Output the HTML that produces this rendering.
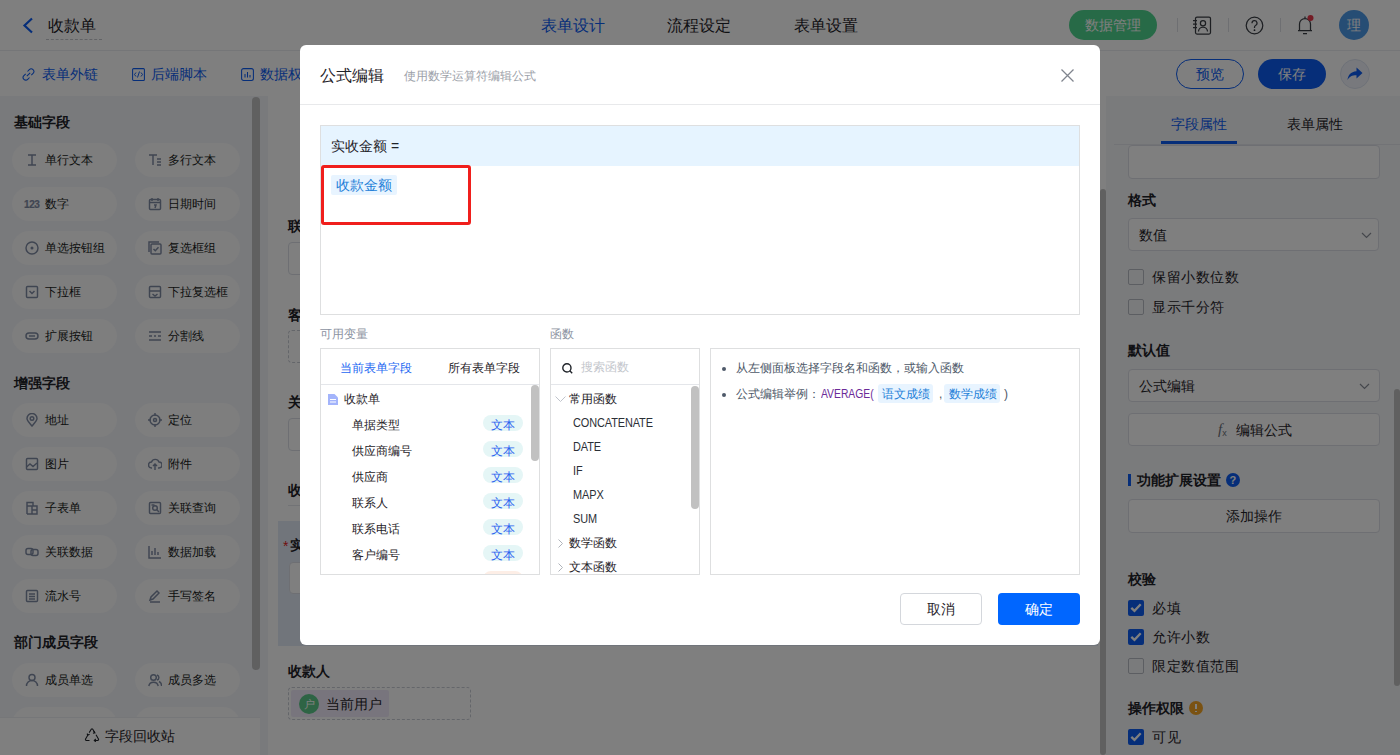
<!DOCTYPE html>
<html><head><meta charset="utf-8">
<style>
*{box-sizing:border-box;margin:0;padding:0}
html,body{width:1400px;height:755px;overflow:hidden;background:#fff}
body{position:relative;font-family:"Liberation Sans",sans-serif;font-size:14px;color:#1f2329}
.a{position:absolute}
.t{white-space:nowrap;line-height:1}
/* header */
#hdr{left:0;top:0;width:1400px;height:51px;background:#fff;border-bottom:1px solid #ebedf0}
#tb{left:0;top:51px;width:1400px;height:45px;background:#fff}
#lp{left:0;top:96px;width:262px;height:659px;background:#f2f4f8}
#cv{left:262px;top:96px;width:844px;height:659px;background:#fff}
#rp{left:1106px;top:96px;width:294px;height:659px;background:#f5f6f8}
.pill{position:absolute;width:105px;height:34px;border-radius:17px;background:#fcfcfd}
.pill .ic{position:absolute;left:13px;top:10px;width:14px;height:14px}
.pill span{position:absolute;left:33px;top:11px;font-size:12px;line-height:12px;color:#1a1d22;white-space:nowrap}
.sec{position:absolute;left:14px;font-size:14px;font-weight:bold;color:#1f2329;line-height:14px}
#mask{left:0;top:0;width:1400px;height:755px;background:rgba(0,0,0,.5)}
#modal{left:300px;top:45px;width:800px;height:600px;background:#fff;border-radius:6px;overflow:hidden}
</style></head><body>
<div id="hdr" class="a">
  <svg class="a" style="left:22px;top:17px" width="12" height="17" viewBox="0 0 12 17"><path d="M10 1.5 L2.5 8.5 L10 15.5" fill="none" stroke="#0c5cf2" stroke-width="2.2"/></svg>
  <div class="a t" style="left:48px;top:18px;font-size:16px;color:#1f2329">收款单</div>
  <div class="a" style="left:46px;top:39px;width:56px;border-top:1px dashed #c4c7cc"></div>
  <div class="a t" style="left:541px;top:18px;font-size:16px;color:#0c5cf2">表单设计</div>
  <div class="a t" style="left:667px;top:18px;font-size:16px;color:#1f2329">流程设定</div>
  <div class="a t" style="left:794px;top:18px;font-size:16px;color:#1f2329">表单设置</div>
  <div class="a" style="left:1069px;top:10px;width:88px;height:30px;border-radius:15px;background:#4fd48f"></div>
  <div class="a t" style="left:1085px;top:18px;font-size:14px;color:#fff">数据管理</div>
  <div class="a" style="left:1177px;top:18px;width:1px;height:14px;background:#dcdfe4"></div>
  <div class="a" style="left:1228px;top:18px;width:1px;height:14px;background:#dcdfe4"></div>
  <div class="a" style="left:1280px;top:18px;width:1px;height:14px;background:#dcdfe4"></div>
  <svg class="a" style="left:1192px;top:16px" width="20" height="19" viewBox="0 0 20 19"><rect x="3.5" y="1" width="15" height="17" rx="1.5" fill="none" stroke="#3a3e45" stroke-width="1.25"/><circle cx="11" cy="7.3" r="2.6" fill="none" stroke="#3a3e45" stroke-width="1.25"/><path d="M6.5 15.5a4.5 4.5 0 0 1 9 0" fill="none" stroke="#3a3e45" stroke-width="1.25"/><path d="M1 4.5h4M1 8h4M1 11.5h4" stroke="#3a3e45" stroke-width="1.25"/></svg>
  <svg class="a" style="left:1245px;top:16px" width="19" height="19" viewBox="0 0 19 19"><circle cx="9.5" cy="9.5" r="8.3" fill="none" stroke="#3a3e45" stroke-width="1.25"/><path d="M7 7.2a2.5 2.5 0 1 1 3.5 2.3c-.8.4-1 .9-1 1.8v.6" fill="none" stroke="#3a3e45" stroke-width="1.25"/><circle cx="9.5" cy="14.2" r=".9" fill="#2b2f36"/></svg>
  <svg class="a" style="left:1296px;top:14px" width="20" height="21" viewBox="0 0 20 21"><path d="M2 16.5h14M3.5 16.5V10a5.5 5.5 0 0 1 11 0v6.5M7 19.5h4M9 2.5v2" fill="none" stroke="#3a3e45" stroke-width="1.25"/><circle cx="14.5" cy="4" r="3" fill="#e8384a"/></svg>
  <div class="a" style="left:1339px;top:10px;width:30px;height:30px;border-radius:15px;background:#4d9ae8"></div>
  <div class="a t" style="left:1347px;top:18px;font-size:14px;color:#fff">理</div>
</div>
<div id="tb" class="a">
  <svg class="a" style="left:22px;top:17px" width="13" height="13" viewBox="0 0 13 13"><path d="M5.5 3.5l1.8-1.8a2.6 2.6 0 0 1 3.8 3.7L9.3 7.2M7.5 9.5L5.7 11.3a2.6 2.6 0 0 1-3.8-3.7L3.7 5.8M4.8 8.2l3.4-3.4" fill="none" stroke="#0c5cf2" stroke-width="1.05"/></svg>
  <div class="a t" style="left:42px;top:16px;font-size:14px;color:#0c5cf2">表单外链</div>
  <svg class="a" style="left:132px;top:17px" width="13" height="13" viewBox="0 0 13 13"><rect x=".6" y=".6" width="11.8" height="11.8" rx="1" fill="none" stroke="#0c5cf2" stroke-width="1.05"/><path d="M4 4.5L2.5 6.5 4 8.5M9 4.5l1.5 2L9 8.5M7.5 3.5l-2 6" fill="none" stroke="#0c5cf2" stroke-width="1"/></svg>
  <div class="a t" style="left:151px;top:16px;font-size:14px;color:#0c5cf2">后端脚本</div>
  <svg class="a" style="left:241px;top:17px" width="13" height="13" viewBox="0 0 13 13"><rect x=".6" y=".6" width="11.8" height="11.8" rx="2" fill="none" stroke="#0c5cf2" stroke-width="1.05"/><path d="M4 6v3.5M6.5 4v5.5M9 7v2.5" fill="none" stroke="#0c5cf2" stroke-width="1.05"/></svg>
  <div class="a t" style="left:260px;top:16px;font-size:14px;color:#0c5cf2">数据权限</div>
  <div class="a" style="left:1176px;top:8px;width:68px;height:30px;border-radius:15px;border:1px solid #0c5cf2"></div>
  <div class="a t" style="left:1196px;top:16px;font-size:14px;color:#0c5cf2">预览</div>
  <div class="a" style="left:1258px;top:8px;width:68px;height:30px;border-radius:15px;background:#0c5cf2"></div>
  <div class="a t" style="left:1278px;top:16px;font-size:14px;color:#fff">保存</div>
  <div class="a" style="left:1340px;top:8px;width:30px;height:30px;border-radius:15px;background:#f0f3fa;border:1px solid #dde3f0"></div>
  <svg class="a" style="left:1346px;top:15px" width="18" height="16" viewBox="0 0 18 16"><path d="M10.5 1.5L16.5 7l-6 5.5V9.3C6 9.3 3.5 10.5 1.5 14c.6-5 3-8.3 9-8.8z" fill="#0c5cf2"/></svg>
</div>
<div id="lp" class="a">
<div class="sec" style="top:19px">基础字段</div>
<div class="pill" style="left:12px;top:47px"><svg class="ic" viewBox="0 0 14 14"><path d="M3 2h8M3 12h8M7 2v10" stroke="#7f8ba3" fill="none" stroke-width="1.45"/></svg><span>单行文本</span></div>
<div class="pill" style="left:135px;top:47px"><svg class="ic" viewBox="0 0 14 14"><path d="M1 2h8M5 2v10M9 6h4M9 9h4M9 12h4" stroke="#7f8ba3" fill="none" stroke-width="1.45"/></svg><span>多行文本</span></div>
<div class="pill" style="left:12px;top:91px"><div class="t" style="position:absolute;left:12px;top:13px;font-size:10px;line-height:9px;font-weight:bold;color:#7f8ba3;letter-spacing:-.4px;-webkit-text-stroke:.2px #7f8ba3">123</div><span>数字</span></div>
<div class="pill" style="left:135px;top:91px"><svg class="ic" viewBox="0 0 14 14"><rect x="1.5" y="2.5" width="11" height="10" rx="1" stroke="#7f8ba3" fill="none" stroke-width="1.45"/><path d="M1.5 5.5h11M4 1v3M10 1v3M6 8h2l-1 3" stroke="#7f8ba3" fill="none" stroke-width="1.45"/></svg><span>日期时间</span></div>
<div class="pill" style="left:12px;top:135px"><svg class="ic" viewBox="0 0 14 14"><circle cx="7" cy="7" r="6" stroke="#7f8ba3" fill="none" stroke-width="1.45"/><circle cx="7" cy="7" r="1.5" fill="#7f8ba3"/></svg><span>单选按钮组</span></div>
<div class="pill" style="left:135px;top:135px"><svg class="ic" viewBox="0 0 14 14"><path d="M1 11V1h10" stroke="#7f8ba3" fill="none" stroke-width="1.45"/><rect x="3" y="3" width="10" height="10" rx="1" stroke="#7f8ba3" fill="none" stroke-width="1.45"/><path d="M5.5 8l1.8 1.8 3.2-3.5" stroke="#7f8ba3" fill="none" stroke-width="1.45"/></svg><span>复选框组</span></div>
<div class="pill" style="left:12px;top:179px"><svg class="ic" viewBox="0 0 14 14"><rect x="1.5" y="1.5" width="11" height="11" rx="1" stroke="#7f8ba3" fill="none" stroke-width="1.45"/><path d="M4.5 6l2.5 2.5 2.5-2.5" stroke="#7f8ba3" fill="none" stroke-width="1.45"/></svg><span>下拉框</span></div>
<div class="pill" style="left:135px;top:179px"><svg class="ic" viewBox="0 0 14 14"><rect x="1.5" y="1.5" width="11" height="11" rx="1" stroke="#7f8ba3" fill="none" stroke-width="1.45"/><path d="M1.5 6h11M4.5 9l2.5 2 2.5-2" stroke="#7f8ba3" fill="none" stroke-width="1.45"/></svg><span>下拉复选框</span></div>
<div class="pill" style="left:12px;top:223px"><svg class="ic" viewBox="0 0 14 14"><rect x="1" y="4" width="12" height="6" rx="3" stroke="#7f8ba3" fill="none" stroke-width="1.45"/><path d="M4 7h6" stroke="#7f8ba3" fill="none" stroke-width="1.45"/></svg><span>扩展按钮</span></div>
<div class="pill" style="left:135px;top:223px"><svg class="ic" viewBox="0 0 14 14"><path d="M1 3h12M1 7h3M6 7h2M10 7h3M1 11h12" stroke="#7f8ba3" fill="none" stroke-width="1.45"/></svg><span>分割线</span></div>
<div class="sec" style="top:280px">增强字段</div>
<div class="pill" style="left:12px;top:307px"><svg class="ic" viewBox="0 0 14 14"><path d="M7 13C4 9.5 2 7.5 2 5.5a5 5 0 0 1 10 0c0 2-2 4-5 7.5z" stroke="#7f8ba3" fill="none" stroke-width="1.45"/><circle cx="7" cy="5.5" r="1.8" stroke="#7f8ba3" fill="none" stroke-width="1.45"/></svg><span>地址</span></div>
<div class="pill" style="left:135px;top:307px"><svg class="ic" viewBox="0 0 14 14"><circle cx="7" cy="7" r="5" stroke="#7f8ba3" fill="none" stroke-width="1.45"/><circle cx="7" cy="7" r="1.5" stroke="#7f8ba3" fill="none" stroke-width="1.45"/><path d="M7 0v3M7 11v3M0 7h3M11 7h3" stroke="#7f8ba3" fill="none" stroke-width="1.45"/></svg><span>定位</span></div>
<div class="pill" style="left:12px;top:351px"><svg class="ic" viewBox="0 0 14 14"><rect x="1.5" y="1.5" width="11" height="11" rx="1" stroke="#7f8ba3" fill="none" stroke-width="1.45"/><path d="M1.5 10l3.5-3 3 2.5 4-3.5" stroke="#7f8ba3" fill="none" stroke-width="1.45"/></svg><span>图片</span></div>
<div class="pill" style="left:135px;top:351px"><svg class="ic" viewBox="0 0 14 14"><path d="M4 11H3.5a3 3 0 0 1 0-6 4 4 0 0 1 7.5 0 3 3 0 0 1 0 6H10M7 7v6M5 9l2-2 2 2" stroke="#7f8ba3" fill="none" stroke-width="1.45"/></svg><span>附件</span></div>
<div class="pill" style="left:12px;top:395px"><svg class="ic" viewBox="0 0 14 14"><path d="M2 13V1.5h6V5M2 5h10v8H2M7 9h5M7 5v8" stroke="#7f8ba3" fill="none" stroke-width="1.45"/></svg><span>子表单</span></div>
<div class="pill" style="left:135px;top:395px"><svg class="ic" viewBox="0 0 14 14"><rect x="1.5" y="1.5" width="11" height="11" rx="1" stroke="#7f8ba3" fill="none" stroke-width="1.45"/><circle cx="7" cy="7" r="2.3" stroke="#7f8ba3" fill="none" stroke-width="1.45"/><path d="M8.6 8.6l2.4 2.4M3.5 4h3" stroke="#7f8ba3" fill="none" stroke-width="1.45"/></svg><span>关联查询</span></div>
<div class="pill" style="left:12px;top:439px"><svg class="ic" viewBox="0 0 14 14"><rect x="1" y="3.5" width="7" height="6" rx="2" stroke="#7f8ba3" fill="none" stroke-width="1.45"/><rect x="6" y="4.5" width="7" height="6" rx="2" stroke="#7f8ba3" fill="none" stroke-width="1.45"/></svg><span>关联数据</span></div>
<div class="pill" style="left:135px;top:439px"><svg class="ic" viewBox="0 0 14 14"><path d="M1 1v12h12M4 10V6M7 10V3M10 10V7" stroke="#7f8ba3" fill="none" stroke-width="1.45"/></svg><span>数据加载</span></div>
<div class="pill" style="left:12px;top:483px"><svg class="ic" viewBox="0 0 14 14"><rect x="1.5" y="1.5" width="11" height="11" rx="1" stroke="#7f8ba3" fill="none" stroke-width="1.45"/><path d="M4 5h6M4 7.5h6M4 10h6" stroke="#7f8ba3" fill="none" stroke-width="1.45"/></svg><span>流水号</span></div>
<div class="pill" style="left:135px;top:483px"><svg class="ic" viewBox="0 0 14 14"><path d="M2 11l1-3 6-6 2 2-6 6zM2 13h10" stroke="#7f8ba3" fill="none" stroke-width="1.45"/></svg><span>手写签名</span></div>
<div class="sec" style="top:539px">部门成员字段</div>
<div class="pill" style="left:12px;top:567px"><svg class="ic" viewBox="0 0 14 14"><circle cx="7" cy="4.5" r="3" stroke="#7f8ba3" fill="none" stroke-width="1.45"/><path d="M1.5 13a5.5 5.5 0 0 1 11 0" stroke="#7f8ba3" fill="none" stroke-width="1.45"/></svg><span>成员单选</span></div>
<div class="pill" style="left:135px;top:567px"><svg class="ic" viewBox="0 0 14 14"><circle cx="5.5" cy="4.5" r="2.8" stroke="#7f8ba3" fill="none" stroke-width="1.45"/><path d="M0.8 13a4.8 4.8 0 0 1 9.4 0M9 2a2.6 2.6 0 0 1 0 5M11 8.5a4.5 4.5 0 0 1 2.5 4.5" stroke="#7f8ba3" fill="none" stroke-width="1.45"/></svg><span>成员多选</span></div>
<div class="pill" style="left:12px;top:611px"><svg class="ic" viewBox="0 0 14 14"><rect x="4.5" y="1" width="5" height="4" stroke="#7f8ba3" fill="none" stroke-width="1.45"/><path d="M7 5v3M2 10V8h10v2" stroke="#7f8ba3" fill="none" stroke-width="1.45"/></svg><span>部门单选</span></div>
<div class="pill" style="left:135px;top:611px"><svg class="ic" viewBox="0 0 14 14"><rect x="4.5" y="1" width="5" height="4" stroke="#7f8ba3" fill="none" stroke-width="1.45"/><path d="M7 5v3M2 10V8h10v2" stroke="#7f8ba3" fill="none" stroke-width="1.45"/></svg><span>部门多选</span></div>
<div class="a" style="left:252px;top:1px;width:8px;height:573px;border-radius:4px;background:#c1c1c1"></div>
<div class="a" style="left:0;top:621px;width:260px;height:38px;background:#fff;border-top:1px solid #eceef2"></div>
<svg class="a" style="left:84px;top:632px" width="16" height="14" viewBox="0 0 16 14"><path d="M5.2 4.6L7.4 1h1.2l2.1 3.5M12 6.8l2.6 4.4-.6 1.3H10.5M5.5 12.5H2l-.6-1.3L3.9 7" fill="none" stroke="#1f2329" stroke-width="1.1"/><path d="M9.6 3.2l1.3 1.6-2 .4M11.8 11l-1.5 1.5 1.5 1.3M3 5.6l.9 1.5 1.7-.9" fill="none" stroke="#1f2329" stroke-width="1.1"/></svg>
<div class="a t" style="left:105px;top:633px;font-size:14px;color:#1f2329">字段回收站</div>
</div>
<div id="cv" class="a">
  <div class="a" style="left:-2px;top:0;width:8px;height:659px;background:#f2f4f8"></div>
  <div class="a t" style="left:26px;top:123px;font-size:14px;font-weight:bold;color:#1f2329">联系人</div>
  <div class="a" style="left:26px;top:146px;width:300px;height:33px;border:1px solid #dcdfe6;border-radius:4px"></div>
  <div class="a t" style="left:26px;top:212px;font-size:14px;font-weight:bold;color:#1f2329">客户编号</div>
  <div class="a" style="left:26px;top:234px;width:300px;height:33px;border:1px dashed #c8ccd4;border-radius:4px"></div>
  <div class="a t" style="left:26px;top:299px;font-size:14px;font-weight:bold;color:#1f2329">关联单据</div>
  <div class="a" style="left:26px;top:322px;width:300px;height:33px;border:1px solid #dcdfe6;border-radius:4px"></div>
  <div class="a t" style="left:26px;top:387px;font-size:14px;font-weight:bold;color:#1f2329">收款信息</div>
  <div class="a" style="left:26px;top:409px;width:800px;height:1px;background:#e4e7ec"></div>
  <div class="a" style="left:16px;top:425px;width:820px;height:125px;background:#e3eaf7"></div>
  <div class="a t" style="left:21px;top:443px;font-size:14px;color:#e02020">*</div>
  <div class="a t" style="left:28px;top:442px;font-size:14px;font-weight:bold;color:#1f2329">实收金额</div>
  <div class="a" style="left:27px;top:466px;width:300px;height:32px;border:1px solid #dcdfe6;border-radius:4px;background:#fff"></div>
  <div class="a t" style="left:26px;top:568px;font-size:14px;font-weight:bold;color:#1f2329">收款人</div>
  <div class="a" style="left:26px;top:591px;width:183px;height:33px;border:1px dashed #c8ccd4;border-radius:4px"></div>
  <div class="a" style="left:29px;top:594px;width:98px;height:27px;border-radius:2px;background:#f0ebfa"></div>
  <div class="a" style="left:37px;top:598px;width:20px;height:20px;border-radius:10px;background:#5cc98a"></div>
  <div class="a t" style="left:42px;top:603px;font-size:11px;color:#fff">户</div>
  <div class="a t" style="left:64px;top:601px;font-size:14px;color:#1f2329">当前用户</div>
  <div class="a" style="left:838px;top:0;width:6px;height:659px;background:#fff"></div>
  <div class="a" style="left:838px;top:93px;width:6px;height:566px;border-radius:3px;background:#c1c1c1"></div>
</div>
<div id="rp" class="a">
  <div class="a t" style="left:65px;top:21px;font-size:14px;color:#0c5cf2">字段属性</div>
  <div class="a t" style="left:181px;top:21px;font-size:14px;color:#1f2329">表单属性</div>
  <div class="a" style="left:8px;top:48px;width:286px;height:1px;background:#e4e7ec"></div>
  <div class="a" style="left:55px;top:45px;width:76px;height:3px;background:#0c5cf2"></div>
  <div class="a" style="left:22px;top:49px;width:252px;height:34px;border:1px solid #dcdfe6;border-radius:4px;background:#fff"></div>
  <div class="a t" style="left:22px;top:97px;font-size:14px;font-weight:bold;color:#1f2329">格式</div>
  <div class="a" style="left:22px;top:122px;width:251px;height:33px;border:1px solid #dcdfe6;border-radius:4px;background:#fff"></div>
  <div class="a t" style="left:33px;top:132px;font-size:14px;color:#1f2329">数值</div>
  <svg class="a" style="left:255px;top:136px" width="11" height="7" viewBox="0 0 11 7"><path d="M1 1l4.5 4.5L10 1" fill="none" stroke="#8a8f99" stroke-width="1.2"/></svg>
  <div class="a" style="left:22px;top:173px;width:16px;height:16px;border:1px solid #b9bdc5;border-radius:2px;background:transparent"></div>
  <div class="a t" style="left:46px;top:174px;font-size:14px;color:#1f2329;letter-spacing:.5px">保留小数位数</div>
  <div class="a" style="left:22px;top:203px;width:16px;height:16px;border:1px solid #b9bdc5;border-radius:2px;background:transparent"></div>
  <div class="a t" style="left:46px;top:204px;font-size:14px;color:#1f2329;letter-spacing:.5px">显示千分符</div>
  <div class="a t" style="left:22px;top:247px;font-size:14px;font-weight:bold;color:#1f2329">默认值</div>
  <div class="a" style="left:22px;top:273px;width:252px;height:33px;border:1px solid #dcdfe6;border-radius:4px;background:#fff"></div>
  <div class="a t" style="left:33px;top:283px;font-size:14px;color:#1f2329">公式编辑</div>
  <svg class="a" style="left:253px;top:287px" width="11" height="7" viewBox="0 0 11 7"><path d="M1 1l4.5 4.5L10 1" fill="none" stroke="#8a8f99" stroke-width="1.2"/></svg>
  <div class="a" style="left:22px;top:317px;width:252px;height:33px;border:1px solid #dcdfe6;border-radius:4px;background:#fff"></div>
  <div class="a t" style="left:112px;top:326px;font-size:15px;font-style:italic;color:#6b7079;font-family:'Liberation Serif',serif">f<span style="font-size:9px;font-style:normal;font-family:'Liberation Sans',sans-serif;position:relative;top:2px">x</span></div>
  <div class="a t" style="left:130px;top:327px;font-size:14px;color:#1f2329">编辑公式</div>
  <div class="a" style="left:22px;top:378px;width:3px;height:12px;background:#0c5cf2"></div>
  <div class="a t" style="left:31px;top:377px;font-size:14px;font-weight:bold;color:#1f2329">功能扩展设置</div>
  <div class="a" style="left:120px;top:377px;width:14px;height:14px;border-radius:7px;background:#0c5cf2"></div>
  <div class="a t" style="left:123.5px;top:378.5px;font-size:11px;font-weight:bold;color:#fff">?</div>
  <div class="a" style="left:22px;top:403px;width:252px;height:34px;border:1px solid #dcdfe6;border-radius:4px;background:#fff"></div>
  <div class="a t" style="left:120px;top:413px;font-size:14px;color:#1f2329">添加操作</div>
  <div class="a t" style="left:22px;top:476px;font-size:14px;font-weight:bold;color:#1f2329">校验</div>
  <div class="a" style="left:22px;top:504px;width:16px;height:16px;border-radius:2px;background:#0c5cf2"></div>
  <svg class="a" style="left:22px;top:504px" width="16" height="16" viewBox="0 0 16 16"><path d="M3.3 7.8l3.2 3.1 6.2-6.6" fill="none" stroke="#fff" stroke-width="2.3"/></svg>
  <div class="a t" style="left:46px;top:505px;font-size:14px;color:#1f2329;letter-spacing:.5px">必填</div>
  <div class="a" style="left:22px;top:533px;width:16px;height:16px;border-radius:2px;background:#0c5cf2"></div>
  <svg class="a" style="left:22px;top:533px" width="16" height="16" viewBox="0 0 16 16"><path d="M3.3 7.8l3.2 3.1 6.2-6.6" fill="none" stroke="#fff" stroke-width="2.3"/></svg>
  <div class="a t" style="left:46px;top:534px;font-size:14px;color:#1f2329;letter-spacing:.5px">允许小数</div>
  <div class="a" style="left:22px;top:562px;width:16px;height:16px;border:1px solid #b9bdc5;border-radius:2px;background:transparent"></div>
  <div class="a t" style="left:46px;top:563px;font-size:14px;color:#1f2329;letter-spacing:.5px">限定数值范围</div>
  <div class="a t" style="left:22px;top:605px;font-size:14px;font-weight:bold;color:#1f2329">操作权限</div>
  <div class="a" style="left:83px;top:605px;width:14px;height:14px;border-radius:7px;background:#f5a524"></div>
  <div class="a" style="left:89.3px;top:608px;width:1.6px;height:5px;background:#fff"></div>
  <div class="a" style="left:89.3px;top:614.5px;width:1.6px;height:1.6px;background:#fff"></div>
  <div class="a" style="left:22px;top:633px;width:16px;height:16px;border-radius:2px;background:#0c5cf2"></div>
  <svg class="a" style="left:22px;top:633px" width="16" height="16" viewBox="0 0 16 16"><path d="M3.3 7.8l3.2 3.1 6.2-6.6" fill="none" stroke="#fff" stroke-width="2.3"/></svg>
  <div class="a t" style="left:46px;top:634px;font-size:14px;color:#1f2329;letter-spacing:.5px">可见</div>
  <div class="a" style="left:288px;top:293px;width:6px;height:297px;border-radius:3px;background:#c1c1c1"></div>
</div>
<div id="mask" class="a"></div>
<div id="modal" class="a">
<div class="a t" style="left:20px;top:23px;font-size:16px;color:#1f2329">公式编辑</div>
<div class="a t" style="left:104px;top:25px;font-size:12px;color:#9ca1a9">使用数学运算符编辑公式</div>
<svg class="a" style="left:761px;top:24px" width="13" height="13" viewBox="0 0 13 13"><path d="M.5 .5l12 12M12.5 .5l-12 12" stroke="#80858e" stroke-width="1.3"/></svg>
<div class="a" style="left:0;top:59px;width:800px;height:1px;background:#e8e9eb"></div>
<div class="a" style="left:20px;top:80px;width:760px;height:190px;border:1px solid #dedfe0;background:#fff"></div>
<div class="a" style="left:21px;top:81px;width:758px;height:40px;background:#e6f4ff"></div>
<div class="a t" style="left:31px;top:94px;font-size:14px;color:#1f2329">实收金额 =</div>
<div class="a" style="left:31px;top:130px;width:66px;height:20px;border-radius:2px;background:#e8f4ff"></div>
<div class="a t" style="left:36px;top:133px;font-size:14px;color:#1d7fd8">收款金额</div>
<div class="a" style="left:21px;top:120px;width:150px;height:60px;border:3px solid #f01f1c;border-radius:3px"></div>
<div class="a t" style="left:20px;top:283px;font-size:12px;color:#8b92a1">可用变量</div>
<div class="a t" style="left:250px;top:283px;font-size:12px;color:#8b92a1">函数</div>
<div class="a" style="left:20px;top:303px;width:220px;height:227px;border:1px solid #dedfe0;overflow:hidden"><div class="a t" style="left:19px;top:13px;font-size:12px;color:#2468f2">当前表单字段</div><div class="a t" style="left:127px;top:13px;font-size:12px;color:#1f2329">所有表单字段</div><div class="a" style="left:0;top:35px;width:218px;height:1px;background:#e4e6ea"></div><svg class="a" style="left:7px;top:45px" width="10" height="11" viewBox="0 0 10 11"><path d="M0 0h6.5L10 3.5V11H0z" fill="#a3b4fb"/><path d="M2 5.5h6M2 8h6" stroke="#fff" stroke-width="1"/></svg><div class="a t" style="left:23px;top:44px;font-size:12px;color:#1f2329">收款单</div><div class="a t" style="left:31px;top:70px;font-size:12px;color:#1f2329">单据类型</div><div class="a" style="left:162px;top:67px;width:40px;height:16px;border-radius:8px;background:#e5f6f6;margin-top:-1px"></div><div class="a t" style="left:170px;top:70px;font-size:12px;color:#2b63f0">文本</div><div class="a t" style="left:31px;top:96px;font-size:12px;color:#1f2329">供应商编号</div><div class="a" style="left:162px;top:93px;width:40px;height:16px;border-radius:8px;background:#e5f6f6;margin-top:-1px"></div><div class="a t" style="left:170px;top:96px;font-size:12px;color:#2b63f0">文本</div><div class="a t" style="left:31px;top:122px;font-size:12px;color:#1f2329">供应商</div><div class="a" style="left:162px;top:119px;width:40px;height:16px;border-radius:8px;background:#e5f6f6;margin-top:-1px"></div><div class="a t" style="left:170px;top:122px;font-size:12px;color:#2b63f0">文本</div><div class="a t" style="left:31px;top:148px;font-size:12px;color:#1f2329">联系人</div><div class="a" style="left:162px;top:145px;width:40px;height:16px;border-radius:8px;background:#e5f6f6;margin-top:-1px"></div><div class="a t" style="left:170px;top:148px;font-size:12px;color:#2b63f0">文本</div><div class="a t" style="left:31px;top:174px;font-size:12px;color:#1f2329">联系电话</div><div class="a" style="left:162px;top:171px;width:40px;height:16px;border-radius:8px;background:#e5f6f6;margin-top:-1px"></div><div class="a t" style="left:170px;top:174px;font-size:12px;color:#2b63f0">文本</div><div class="a t" style="left:31px;top:200px;font-size:12px;color:#1f2329">客户编号</div><div class="a" style="left:162px;top:197px;width:40px;height:16px;border-radius:8px;background:#e5f6f6;margin-top:-1px"></div><div class="a t" style="left:170px;top:200px;font-size:12px;color:#2b63f0">文本</div><div class="a" style="left:162px;top:223px;width:40px;height:16px;border-radius:8px;background:#fdeee6;margin-top:-1px"></div><div class="a" style="left:210px;top:36px;width:8px;height:76px;border-radius:4px;background:#c1c1c1"></div></div>
<div class="a" style="left:250px;top:303px;width:150px;height:227px;border:1px solid #dedfe0;overflow:hidden"><svg class="a" style="left:11px;top:14px" width="11" height="11" viewBox="0 0 11 11"><circle cx="4.9" cy="4.9" r="4.1" fill="none" stroke="#1f2329" stroke-width="1.4"/><path d="M7.8 7.8l2.4 2.4" stroke="#1f2329" stroke-width="1.4"/></svg><div class="a t" style="left:30px;top:12px;font-size:12px;color:#c3c6cc">搜索函数</div><div class="a" style="left:0;top:35px;width:148px;height:1px;background:#e4e6ea"></div><svg class="a" style="left:4px;top:47px" width="11" height="7" viewBox="0 0 11 7"><path d="M.5 .5l5 5 5-5" fill="none" stroke="#c0c4cc" stroke-width="1"/></svg><div class="a t" style="left:18px;top:44px;font-size:12px;color:#1f2329">常用函数</div><div class="a t" style="left:22px;top:68px;font-size:12px;letter-spacing:-0.1px;color:#2b2f36;transform:scaleX(.91);transform-origin:0 0">CONCATENATE</div><div class="a t" style="left:22px;top:92px;font-size:12px;letter-spacing:-0.1px;color:#2b2f36;transform:scaleX(.91);transform-origin:0 0">DATE</div><div class="a t" style="left:22px;top:116px;font-size:12px;letter-spacing:-0.1px;color:#2b2f36;transform:scaleX(.91);transform-origin:0 0">IF</div><div class="a t" style="left:22px;top:140px;font-size:12px;letter-spacing:-0.1px;color:#2b2f36;transform:scaleX(.91);transform-origin:0 0">MAPX</div><div class="a t" style="left:22px;top:164px;font-size:12px;letter-spacing:-0.1px;color:#2b2f36;transform:scaleX(.91);transform-origin:0 0">SUM</div><svg class="a" style="left:7px;top:190px" width="5" height="9" viewBox="0 0 5 9"><path d="M.5 .5l4 4-4 4" fill="none" stroke="#b0b4bb" stroke-width="1"/></svg><div class="a t" style="left:18px;top:188px;font-size:12px;color:#1f2329">数学函数</div><svg class="a" style="left:7px;top:214px" width="5" height="9" viewBox="0 0 5 9"><path d="M.5 .5l4 4-4 4" fill="none" stroke="#b0b4bb" stroke-width="1"/></svg><div class="a t" style="left:18px;top:212px;font-size:12px;color:#1f2329">文本函数</div><div class="a" style="left:140px;top:37px;width:8px;height:123px;border-radius:4px;background:#c1c1c1"></div></div>
<div class="a" style="left:410px;top:303px;width:370px;height:227px;border:1px solid #dedfe0;overflow:hidden"><div class="a" style="left:11px;top:18px;width:4px;height:4px;border-radius:2px;background:#4e5969"></div><div class="a t" style="left:25px;top:13px;font-size:12px;color:#4e5969">从左侧面板选择字段名和函数，或输入函数</div><div class="a" style="left:11px;top:44px;width:4px;height:4px;border-radius:2px;background:#4e5969"></div><div class="a t" style="left:25px;top:39px;font-size:12px;color:#4e5969">公式编辑举例：</div><div class="a t" style="left:110px;top:39px;font-size:12px;color:#6b2a98;transform:scaleX(.86);transform-origin:0 0">AVERAGE(</div><div class="a" style="left:167px;top:35px;width:55px;height:19px;border-radius:3px;background:#e8f4ff"></div><div class="a t" style="left:171px;top:39px;font-size:12px;color:#1d7fd8">语文成绩</div><div class="a t" style="left:228px;top:39px;font-size:12px;color:#4e5969">,</div><div class="a" style="left:233px;top:35px;width:56px;height:19px;border-radius:3px;background:#e8f4ff"></div><div class="a t" style="left:238px;top:39px;font-size:12px;color:#1d7fd8">数学成绩</div><div class="a t" style="left:293px;top:39px;font-size:12px;color:#4e5969">)</div></div>
<div class="a" style="left:600px;top:548px;width:82px;height:32px;border:1px solid #d4d7dc;border-radius:4px;background:#fff"></div>
<div class="a t" style="left:627px;top:557px;font-size:14px;color:#1f2329">取消</div>
<div class="a" style="left:698px;top:548px;width:82px;height:32px;border-radius:4px;background:#0066ff"></div>
<div class="a t" style="left:725px;top:557px;font-size:14px;color:#fff">确定</div>
</div>
</body></html>
